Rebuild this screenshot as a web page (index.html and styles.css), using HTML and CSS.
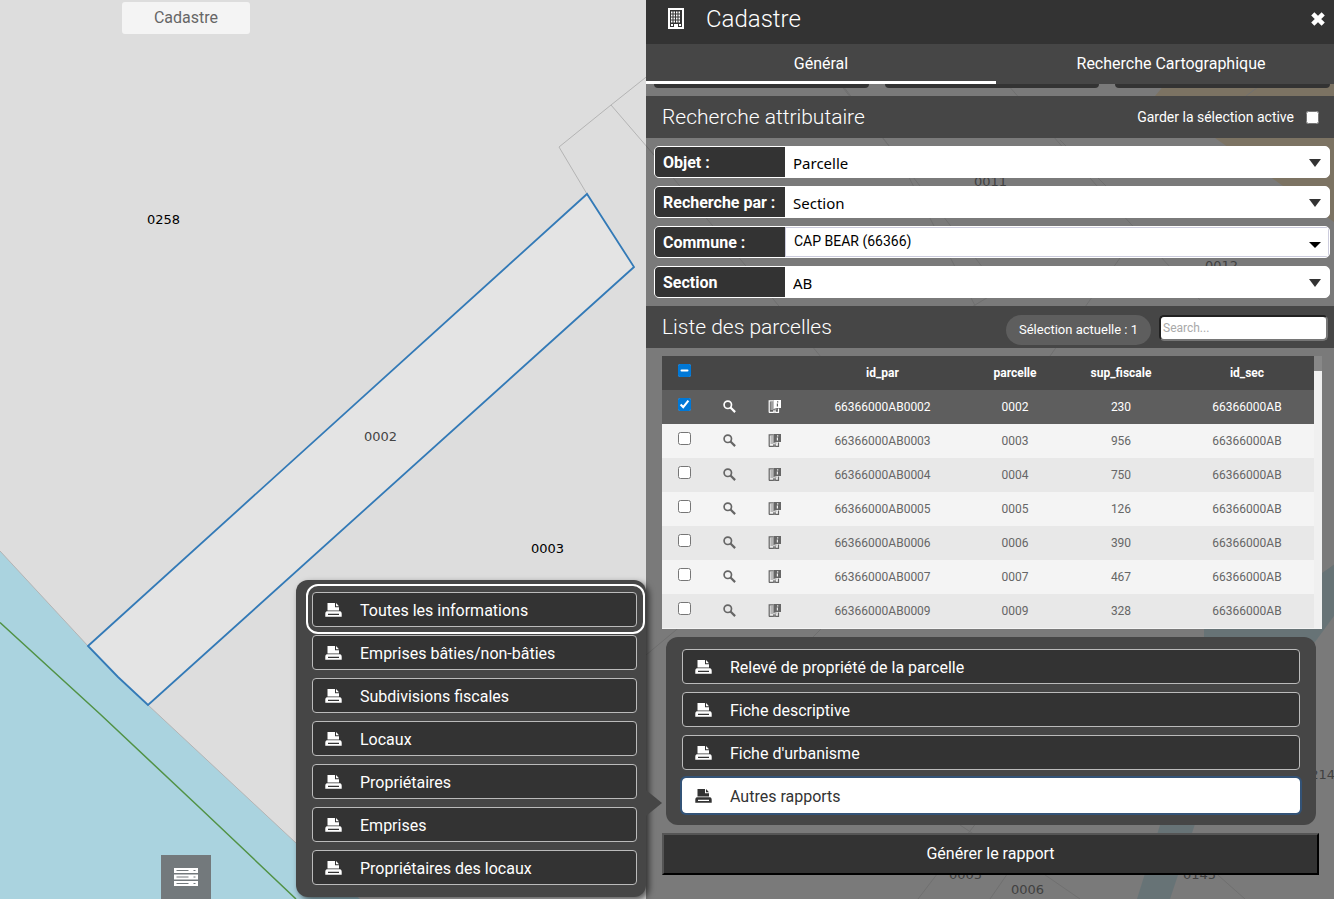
FILE: index.html
```html
<!DOCTYPE html>
<html lang="fr">
<head>
<meta charset="utf-8">
<title>Cadastre</title>
<link rel="stylesheet" href="styles.css">
</head>
<body>
<svg width="0" height="0" class="sprite" aria-hidden="true">
  <symbol id="print" viewBox="0 0 17 14">
    <path d="M2.500 0H10v4.200h4V7.500H2.500z"/><path d="M11 0l3 3.200h-3z"/>
    <path fill-rule="evenodd" d="M2 8.300h13c1 0 1.700 1.200 1.700 2.500v2.900H.3v-2.900C.3 9.500 1 8.300 2 8.300zM3 10.700v1.200h11v-1.200z"/>
  </symbol>
  <symbol id="search" viewBox="0 0 13 13">
    <circle cx="4.800" cy="4.800" r="3.700" fill="none" stroke="currentColor" stroke-width="1.700"/>
    <path d="M7.500 7.500l4.600 4.600" stroke="currentColor" stroke-width="2.200"/>
  </symbol>
  <symbol id="info" viewBox="0 0 13 13">
    <path d="M1.200 12.500V.8H5.500M1 12.300h4.500M7.500 12.300h3V8.500" fill="none" stroke="currentColor" stroke-width="1.200"/>
    <path opacity=".8" d="M2.500 2.500h3v1h-3zM2.500 4.500h3v1h-3zM2.500 6.500h3v1h-3zM2.500 8.500h3v1h-3zM6.500 8.500h2v1h-2zM5 10.300h3V13H5z"/>
    <path fill-rule="evenodd" d="M5.500 0H13v8H7.500l-2 1.200zM9 1.300v1.200h1.300V1.300zM8.800 3.500v3H10v-3z"/>
  </symbol>
</svg>

<div class="app">
  <svg class="map" role="img" aria-label="Carte cadastrale">
    <path class="water" d="M0 551L88 646L148 705L296 843L360 899H0z"/>
    <path class="edge" d="M0 551L88 646L148 705L296 843"/>
    <path class="limit" d="M0 622.500L100 714L200 808L296 899"/>
    <path class="edge" d="M587 194L559 147L611 105L650 74M611 105L660 162"/>
    <path class="edge faint" d="M660 162L840 380M823 60L1000 290L970 308M840 84L900 160L985 325M1050 356L1140 230M1007 84L1120 212L1200 300M1060 140L1110 190M646 655L700 610M810 640L860 590M918 899L980 818M990 899L1010 870M1035 868L1080 899M1210 868L1245 899M960 825L975 835"/>
    <path class="land" d="M1165 84H1334V222L1215 138L1155 96z"/>
    <path class="edge faint" d="M1246 96L1262 84M1322 574L1334 565"/>
    <path class="stream" d="M1334 565L1322 573L1204 626V642H1315L1334 616zM1195 824L1160 825L1137 899H1170z"/>
    <path class="parcel" d="M88 646L587 194L634 267L148 705L118 677z"/>
    <g class="number">
      <text x="147" y="224">0258</text>
      <text class="soft" x="364" y="441">0002</text>
      <text x="531" y="553">0003</text>
      <text class="dim" x="974" y="186">0011</text>
      <text class="dim" x="1205" y="270">0012</text>
      <text class="dim" x="949" y="879">0005</text>
      <text class="dim" x="1011" y="894">0006</text>
      <text class="dim" x="1183" y="879">0145</text>
      <text class="dim" x="1302" y="779">0214</text>
    </g>
  </svg>

  <main class="left">
    <button class="maptag">Cadastre</button>
    <button class="layers" aria-label="Couches">
      <svg viewBox="0 0 24 19" width="24" height="19"><path fill="#fff" d="M0 0h24v5H0zM0 6.500h24v5H0zM0 13h24v5H0z"/><path stroke="#73797c" d="M2.500 2.500h12M2.500 9h12M2.500 15.500h12M19.500 2.500h2M19.500 9h2M19.500 15.500h2"/></svg>
    </button>
  </main>

  <aside class="panel">
    <header class="title">
      <svg viewBox="0 0 18 22" width="18" height="22"><path fill="none" stroke="#fff" stroke-width="2" d="M2 1h14v19H2z"/><path stroke="#fff" stroke-width="2" stroke-dasharray="1.500 1" d="M4 4.500h10M4 7.500h10M4 10.500h10M4 13.500h10"/><path fill="#fff" d="M4 16h2v2H4zM12 16h2v2h-2zM7 16h4v4H7zM1 19h16v2H1z"/></svg>
      <h1>Cadastre</h1>
      <button class="close" aria-label="Fermer"><svg viewBox="0 0 14 14" width="14" height="14"><path stroke="#fff" stroke-width="4.500" d="M1.800 1.800l10.400 10.400M12.200 1.800L1.800 12.200"/></svg></button>
    </header>
    <nav class="tabs"><button class="tab on">Général</button><button class="tab">Recherche Cartographique</button></nav>
    <div class="tools"><span></span><span></span><span></span></div>

    <section class="bar">
      <h2>Recherche attributaire</h2>
      <label class="keep">Garder la sélection active <input type="checkbox"></label>
    </section>
    <form class="fields">
      <div class="field"><label for="f1">Objet :</label><select id="f1"><option>Parcelle</option></select></div>
      <div class="field"><label for="f2">Recherche par :</label><select id="f2"><option>Section</option></select></div>
      <div class="field combo"><label for="f3">Commune :</label><select id="f3"><option>CAP BEAR (66366)</option></select></div>
      <div class="field"><label for="f4">Section</label><select id="f4"><option>AB</option></select></div>
    </form>

    <section class="bar">
      <h2>Liste des parcelles</h2>
      <div class="tail"><span class="pill">Sélection actuelle : 1</span><input class="find" type="text" placeholder="Search..." aria-label="Search"></div>
    </section>
    <div class="list">
      <table>
        <colgroup><col class="c1"><col class="c1"><col class="c1"><col class="c2"><col class="c3"><col class="c4"><col class="c5"></colgroup>
        <thead><tr><th><input id="all" type="checkbox" aria-label="Tout sélectionner"></th><th></th><th></th><th>id_par</th><th>parcelle</th><th>sup_fiscale</th><th>id_sec</th></tr></thead>
        <tbody>
          <tr class="sel"><td><input type="checkbox" checked aria-label="0002"></td><td><svg><use href="#search"/></svg></td><td><svg><use href="#info"/></svg></td><td>66366000AB0002</td><td>0002</td><td>230</td><td>66366000AB</td></tr>
          <tr><td><input type="checkbox" aria-label="0003"></td><td><svg><use href="#search"/></svg></td><td><svg><use href="#info"/></svg></td><td>66366000AB0003</td><td>0003</td><td>956</td><td>66366000AB</td></tr>
          <tr><td><input type="checkbox" aria-label="0004"></td><td><svg><use href="#search"/></svg></td><td><svg><use href="#info"/></svg></td><td>66366000AB0004</td><td>0004</td><td>750</td><td>66366000AB</td></tr>
          <tr><td><input type="checkbox" aria-label="0005"></td><td><svg><use href="#search"/></svg></td><td><svg><use href="#info"/></svg></td><td>66366000AB0005</td><td>0005</td><td>126</td><td>66366000AB</td></tr>
          <tr><td><input type="checkbox" aria-label="0006"></td><td><svg><use href="#search"/></svg></td><td><svg><use href="#info"/></svg></td><td>66366000AB0006</td><td>0006</td><td>390</td><td>66366000AB</td></tr>
          <tr><td><input type="checkbox" aria-label="0007"></td><td><svg><use href="#search"/></svg></td><td><svg><use href="#info"/></svg></td><td>66366000AB0007</td><td>0007</td><td>467</td><td>66366000AB</td></tr>
          <tr><td><input type="checkbox" aria-label="0009"></td><td><svg><use href="#search"/></svg></td><td><svg><use href="#info"/></svg></td><td>66366000AB0009</td><td>0009</td><td>328</td><td>66366000AB</td></tr>
        </tbody>
      </table>
      <div class="track"><div class="thumb"></div></div>
    </div>

    <div class="reports">
      <button class="report"><svg><use href="#print"/></svg>Relevé de propriété de la parcelle</button>
      <button class="report"><svg><use href="#print"/></svg>Fiche descriptive</button>
      <button class="report"><svg><use href="#print"/></svg>Fiche d'urbanisme</button>
      <button class="report open"><svg><use href="#print"/></svg>Autres rapports</button>
    </div>
    <button class="generate">Générer le rapport</button>

    <div class="popup">
      <button class="report focus"><svg><use href="#print"/></svg>Toutes les informations</button>
      <button class="report"><svg><use href="#print"/></svg>Emprises bâties/non-bâties</button>
      <button class="report"><svg><use href="#print"/></svg>Subdivisions fiscales</button>
      <button class="report"><svg><use href="#print"/></svg>Locaux</button>
      <button class="report"><svg><use href="#print"/></svg>Propriétaires</button>
      <button class="report"><svg><use href="#print"/></svg>Emprises</button>
      <button class="report"><svg><use href="#print"/></svg>Propriétaires des locaux</button>
    </div>
  </aside>
</div>
<script src="app.js"></script>
</body>
</html>
```
FILE: styles.css
```css
* { box-sizing: border-box; }
body { margin: 0; font-family: Roboto, "Liberation Sans", sans-serif; font-size: 16px; color: #fff; background: #ddd; }
button, input, select { font: inherit; margin: 0; }
button { cursor: pointer; }
h1, h2 { margin: 0; font-weight: 300; }
.sprite { position: absolute; }
.app { position: relative; display: grid; grid-template-columns: minmax(0, 646fr) minmax(0, 688fr); min-height: 100vh; overflow: hidden; }

.map { position: absolute; inset: 0; width: 100%; height: 100%; }
.water { fill: #aad3df; }
.stream { fill: #b4cfd6; }
.land { fill: #e3cfab; }
.edge { fill: none; stroke: #b4b4b4; stroke-width: 1; }
.faint { stroke: #c6c6c6; }
.limit { fill: none; stroke: #519245; stroke-width: 1.500; }
.parcel { fill: #e4e4e4; stroke: #337ab7; stroke-width: 1.800; }
.number { font-family: "DejaVu Sans", sans-serif; font-size: 13px; fill: #000; }
.soft { fill: #444; }
.dim { fill: #606060; }

.left { position: relative; display: flex; flex-direction: column; justify-content: space-between; align-items: flex-start; padding: 2px 0 0 122px; }
.maptag { width: 128px; height: 32px; border: 0; border-radius: 3px; background: #f4f4f4; color: #666; padding: 0 0 2px; }
.layers { display: grid; justify-items: center; width: 50px; height: 44px; margin-left: 39px; padding: 13px 0 0; border: 0; background: #73797c; align-content: start; }

.panel { position: relative; display: flex; flex-direction: column; background: rgba(40, 40, 40, .55); }
.title { display: flex; align-items: center; height: 44px; padding: 0 9px 7px 21px; background: #333; }
.title h1 { flex: 1; margin-left: 21px; font-size: 24px; line-height: 28px; }
.close { display: grid; padding: 0; border: 0; background: none; }
.tabs { display: grid; grid-template-columns: 350fr 338fr; height: 40px; background: #464646; }
.tab { padding: 1px 0 0; border: 0; border-bottom: 3px solid transparent; background: none; color: #fff; }
.tab + .tab { padding-left: 12px; }
.tab.on { border-color: #fff; }
.tools { display: grid; grid-template-columns: repeat(3, 1fr); gap: 16px; padding: 0 4px 8px 8px; }
.tools span { height: 4px; border-radius: 0 0 5px 5px; background: #333; }

.bar { display: flex; justify-content: space-between; align-items: center; height: 42px; padding: 0 6px 0 16px; background: #464646; }
.bar h2 { font-size: 21px; line-height: 28px; }
.keep { display: flex; align-items: center; gap: 12px; padding-right: 9px; font-size: 14px; }
.tail { display: flex; align-items: center; gap: 8px; }
.pill { margin-top: 5px; padding: 0 13px; border-radius: 15px; background: #5e5e5e; font-size: 13px; line-height: 30px; }
.find { width: 169px; height: 26px; margin-top: 2px; padding: 0 2px; border: 2px inset #767676; border-radius: 5px; font-size: 12px; }
.find::placeholder { color: #a9a9a9; }

.fields { display: grid; gap: 8px; padding: 8px 4px 8px 8px; }
.field { position: relative; display: flex; height: 32px; border: 1px solid #fff; border-radius: 5px; background: #fff; overflow: hidden; }
.field label { flex: 0 0 130px; padding-left: 8px; background: #333; font-weight: 700; line-height: 32px; }
.field select { flex: 1; min-width: 0; padding: 1px 0 0 8px; border: 0; background: #fff; color: #000; appearance: none; font-family: "Noto Sans", sans-serif; font-size: 15px; }
.field::after { content: ""; position: absolute; right: 8px; top: 12px; border: solid transparent; border-width: 8px 6px 0; border-top-color: #333; pointer-events: none; }
.field.combo select { padding: 0 0 2px 8px; border: 1px solid #ccd; font-family: Roboto, sans-serif; font-size: 14px; }
.combo::after { top: 15px; border-width: 6px 6px 0; border-top-color: #000; }

.list { display: flex; margin: 8px 12px 8px 16px; padding-bottom: 1px; background: #f4f4f4; }
table { flex: 1; min-width: 0; table-layout: fixed; border-collapse: collapse; font-size: 12px; color: #666; }
.c1 { width: 45px; } .c2 { width: 171px; } .c3 { width: 94px; } .c4 { width: 118px; } .c5 { width: 134px; }
th, td { height: 34px; padding: 0; text-align: center; vertical-align: middle; }
thead { background: #464646; color: #fff; }
th { font-weight: 700; }
tbody tr { background: #f4f4f4; }
tbody tr:nth-child(odd) { background: #e8e8e8; }
tbody .sel:nth-child(odd) { background: #5e5e5e; color: #fff; }
input[type="checkbox"] { display: block; width: 13px; height: 13px; accent-color: #0078d7; }
th input, td input { margin: 0 auto 6px; }
td svg { display: block; width: 13px; height: 13px; margin: 0 auto 2px; fill: currentColor; }
.track { width: 8px; background: #f0f0f0; }
.thumb { height: 15px; background: #888; }

.reports { display: grid; gap: 8px; margin: 0 18px 8px 20px; padding: 12px 16px; border-radius: 12px; background: #464646; }
.report { position: relative; display: flex; align-items: center; height: 35px; padding: 2px 12px 0; border: 1px solid #bbb; border-radius: 4px; background: #333; color: #fff; }
.report svg { width: 17px; height: 14px; margin: 0 18px 2px 0; fill: currentColor; }
.report.open { border-color: #fff; background: #fff; color: #333; box-shadow: 0 0 0 2px #335377; }
.generate { height: 42px; margin: 0 15px 0 16px; padding: 0 0 2px; border: 2px solid; border-color: #555 #000 #000 #555; background: #333; color: #fff; }

.popup { position: absolute; right: 100%; bottom: 2px; display: grid; gap: 8px; width: 350px; padding: 12px 9px 12px 16px; border-radius: 12px; background: #464646; box-shadow: 3px 3px 6px rgba(0, 0, 0, .6); }
.popup::after { content: ""; position: absolute; left: 100%; top: 210px; border: solid transparent; border-width: 13px 0 13px 16px; border-left-color: #464646; }
.focus::after { content: ""; position: absolute; inset: -9px -9px -8px -7px; border: 2px solid #fff; border-radius: 12px; }
```
FILE: app.js
```js
document.getElementById("all").indeterminate = true;
```
